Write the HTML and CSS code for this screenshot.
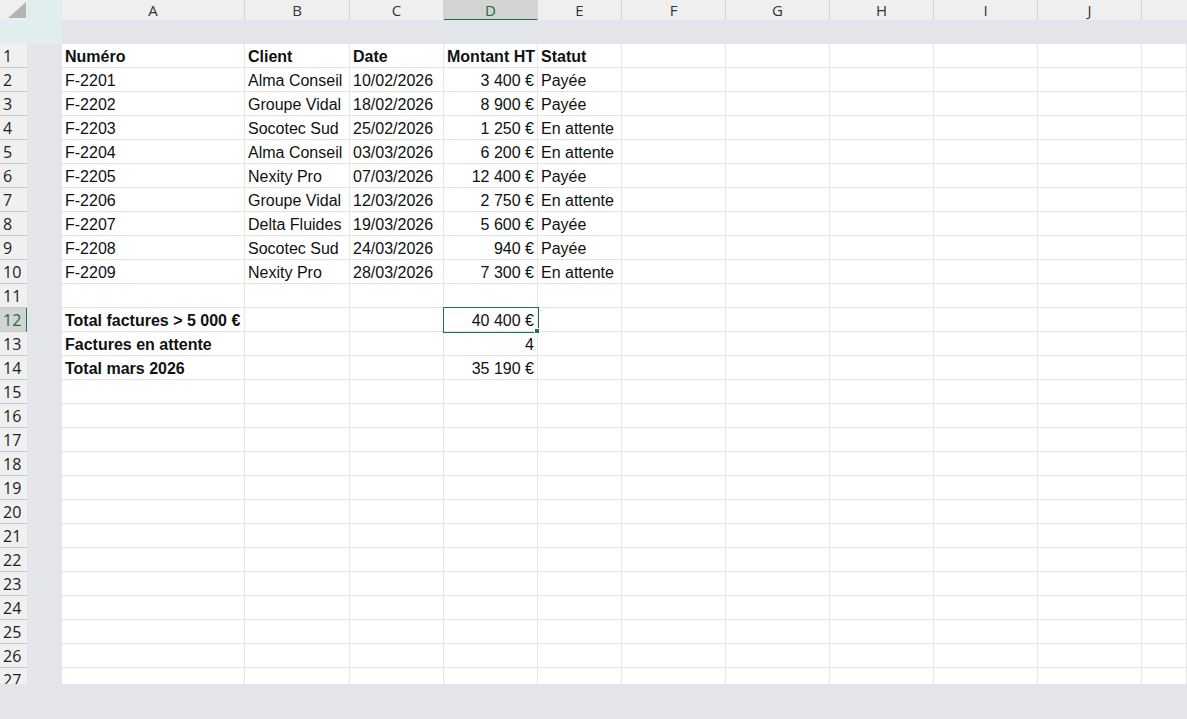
FILE: index.html
```html
<!DOCTYPE html>
<html lang="fr">
<head>
    <meta charset="UTF-8">
    <meta name="viewport" content="width=device-width, initial-scale=1.0">
    <title>Factures</title>
    <link rel="stylesheet" href="styles.css">
</head>
<body>
    <div class="top">
        <div class="corner">
            <svg width="27" height="20" viewBox="0 0 27 20"><polygon points="26,2 26,18 8,18" fill="#b3b3b3"/></svg>
        </div>
        <div class="top-gap"></div>
        <div class="col-heads">
            <div class="col-head w-a">A</div>
            <div class="col-head w-b">B</div>
            <div class="col-head w-c">C</div>
            <div class="col-head w-d active">D</div>
            <div class="col-head w-e">E</div>
            <div class="col-head w-f">F</div>
            <div class="col-head w-f">G</div>
            <div class="col-head w-f">H</div>
            <div class="col-head w-f">I</div>
            <div class="col-head w-f">J</div>
            <div class="col-head w-k"></div>
        </div>
    </div>

    <div class="band">
        <div class="band-left"></div>
    </div>

    <div class="main">
        <div id="row-heads" class="row-heads"></div>
        <div class="strip"></div>
        <div id="sheet" class="sheet"></div>
    </div>

    <script>
        // invoice rows, then the totals block
        const rows = [
            { cells: ['Numéro', 'Client', 'Date', 'Montant HT', 'Statut'], header: true },
            { cells: ['F-2201', 'Alma Conseil', '10/02/2026', '3 400 €', 'Payée'] },
            { cells: ['F-2202', 'Groupe Vidal', '18/02/2026', '8 900 €', 'Payée'] },
            { cells: ['F-2203', 'Socotec Sud', '25/02/2026', '1 250 €', 'En attente'] },
            { cells: ['F-2204', 'Alma Conseil', '03/03/2026', '6 200 €', 'En attente'] },
            { cells: ['F-2205', 'Nexity Pro', '07/03/2026', '12 400 €', 'Payée'] },
            { cells: ['F-2206', 'Groupe Vidal', '12/03/2026', '2 750 €', 'En attente'] },
            { cells: ['F-2207', 'Delta Fluides', '19/03/2026', '5 600 €', 'Payée'] },
            { cells: ['F-2208', 'Socotec Sud', '24/03/2026', '940 €', 'Payée'] },
            { cells: ['F-2209', 'Nexity Pro', '28/03/2026', '7 300 €', 'En attente'] },
            { cells: [] },
            { cells: ['Total factures > 5 000 €', '', '', '40 400 €', ''], label: true },
            { cells: ['Factures en attente', '', '', '4', ''], label: true },
            { cells: ['Total mars 2026', '', '', '35 190 €', ''], label: true }
        ];
        const totalRows = 27;
        const totalCols = 11;
        const selectedRow = 12;

        const sheet = document.getElementById('sheet');
        const rowHeads = document.getElementById('row-heads');

        for (let r = 0; r < totalRows; r++) {
            const head = document.createElement('div');
            head.className = 'row-head' + (r + 1 === selectedRow ? ' active' : '');
            head.textContent = r + 1;
            rowHeads.appendChild(head);

            const data = rows[r] || { cells: [] };
            for (let c = 0; c < totalCols; c++) {
                const cell = document.createElement('div');
                cell.className = 'cell';
                const value = data.cells[c] || '';
                if (c === 3 && !data.header) cell.classList.add('num');
                if (data.header || (data.label && c === 0)) cell.classList.add('bold');
                if (r + 1 === selectedRow && c === 3) cell.classList.add('selected');
                cell.textContent = value.replace(/ (?=\d|€)/g, '\u00a0');
                sheet.appendChild(cell);
            }
        }
    </script>
</body>
</html>
```

FILE: styles.css
```css
body {
    margin: 0;
    padding: 0;
    width: 1187px;
    height: 719px;
    overflow: hidden;
    background-color: #e3e5ea;
    font-family: 'Liberation Sans', Arial, sans-serif;
    color: #111;
}

/* column letters */
.top {
    display: flex;
    height: 20px;
}

.corner {
    width: 27px;
    background-color: #efefef;
}

.corner svg {
    display: block;
}

.top-gap {
    width: 35px;
    background-color: #e0eef0;
}

.col-heads {
    display: flex;
    flex: 1;
    background-color: #efefef;
}

.col-head {
    box-sizing: border-box;
    height: 20px;
    border-right: 1px solid #d4d4d4;
    text-align: center;
    font-family: 'Open Sans', sans-serif;
    font-size: 15px;
    line-height: 20px;
    color: #333;
}

.col-head.active {
    background-color: #d3d3d3;
    color: #1e6b3e;
    border-bottom: 1px solid #217346;
}

.w-a { width: 183px; }
.w-b { width: 105px; }
.w-c { width: 94px; }
.w-d { width: 94px; }
.w-e { width: 84px; }
.w-f { width: 104px; }
.w-k { flex: 1; border-right: none; }

.band {
    height: 24px;
}

.band-left {
    width: 62px;
    height: 24px;
    background-color: #e0eef0;
}

/* grid area */
.main {
    display: flex;
    height: 640px;
    overflow: hidden;
}

.row-heads {
    width: 27px;
    background-color: #f0f0f0;
}

.row-head {
    box-sizing: border-box;
    height: 24px;
    padding: 1px 0 0 3px;
    border-bottom: 1px solid #c8c8c8;
    font-family: 'Open Sans', sans-serif;
    font-size: 16px;
    line-height: 23px;
    color: #222;
}

.row-head.active {
    background-color: #d3d3d3;
    border-right: 1px solid #217346;
    color: #1e6b3e;
}

.strip {
    width: 35px;
}

.sheet {
    flex: 1;
    display: grid;
    grid-template-columns: 183px 105px 94px 94px 84px repeat(5, 104px) 1fr;
    grid-auto-rows: 24px;
    align-content: start;
    background-color: #fff;
}

.cell {
    box-sizing: border-box;
    padding: 2px 3px 0;
    border-right: 1px solid #e6e6e6;
    border-bottom: 1px solid #e3e3e3;
    font-size: 16px;
    line-height: 22px;
    white-space: nowrap;
}

.cell.num {
    text-align: right;
}

.cell.bold {
    font-weight: 700;
}

.cell.selected {
    position: relative;
    z-index: 1;
    box-shadow: 0 0 0 1px #217346;
}

.cell.selected::after {
    content: '';
    position: absolute;
    right: -3px;
    bottom: -3px;
    width: 4px;
    height: 4px;
    background-color: #217346;
    border: 1px solid #fff;
}
```
